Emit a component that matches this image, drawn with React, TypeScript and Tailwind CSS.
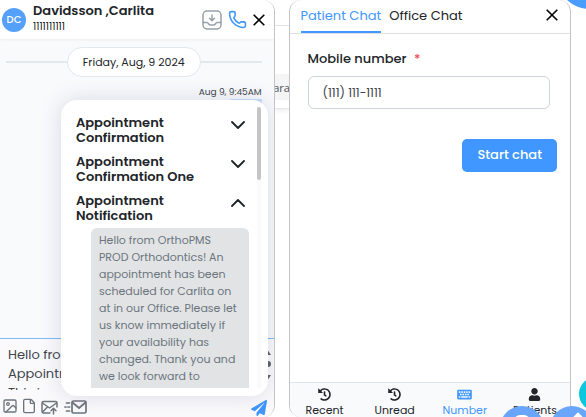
import React from "react";
import { FaHistory, FaKeyboard, FaPaperPlane, FaUser } from "react-icons/fa";
import { File, Image, Phone } from "lucide-react";

const message = `Hello from OrthoPMS
PROD Orthodontics! An
appointment has been
scheduled for Carlita on
at in our Office. Please let
us know immediately if
your availability has
changed. Thank you and
we look forward to`;

function CloseIcon() {
  return (
    <svg viewBox="0 0 12 12" className="size-3" fill="none" stroke="#000" strokeWidth="1.6">
      <path d="M.7.7l10.6 10.6M11.3.7L.7 11.3" />
    </svg>
  );
}

function Chevron({ up = false }: { up?: boolean }) {
  return (
    <svg viewBox="0 0 14 8" className="h-2 w-3.5" fill="none" stroke="#212529" strokeWidth="1.8" strokeLinecap="round" strokeLinejoin="round">
      <path d={up ? "M1 7l6-6 6 6" : "M1 1l6 6 6-6"} />
    </svg>
  );
}

function ArchiveIcon() {
  return (
    <svg viewBox="0 0 20 20" className="size-5" fill="none" stroke="#98a1a9" strokeWidth="1.5" strokeLinecap="round" strokeLinejoin="round">
      <rect x="1" y="1" width="18" height="18" rx="4" />
      <path d="M10 5v5.5M7.5 8.3L10 10.8l2.5-2.5M1 12.5h4c1.5 0 1.6 2.5 3.2 2.5h3.6c1.6 0 1.7-2.5 3.2-2.5h4" />
    </svg>
  );
}

function MailUpIcon() {
  return (
    <svg viewBox="0 0 17 15" className="h-[15px] w-[17px]" fill="none" stroke="#6c757d" strokeWidth="1.5" strokeLinecap="round" strokeLinejoin="round">
      <path d="M9 13H2.5Q1 13 1 11.5V3Q1 1.5 2.5 1.5h12Q16 1.5 16 3v4M1.5 3l7 5 7-5M1.5 12L6 7.5M12.5 14V8.5M10 10.8l2.5-2.5 2.5 2.5" />
    </svg>
  );
}

function MailFastIcon() {
  return (
    <svg viewBox="0 0 23 14" className="h-3.5 w-[23px]" fill="none" stroke="#6c757d" strokeWidth="1.7" strokeLinecap="round" strokeLinejoin="round">
      <rect x="8" y="1" width="14" height="12" rx="1.5" />
      <path d="M8.5 2.5L15 8l6.5-5.5M2.5 3h3M1 7h1M4 7h1.5M2.5 11h3" />
    </svg>
  );
}

function Template({ title, open = false }: { title: [string, string]; open?: boolean }) {
  return (
    <button type="button" aria-expanded={open} className="flex w-full items-start justify-between text-left text-[13px] leading-[15px] font-semibold text-[#212529]">
      <span>
        {title[0]}
        <br />
        {title[1]}
      </span>
      <span className="pt-1.5">
        <Chevron up={open} />
      </span>
    </button>
  );
}

function TemplateMenu() {
  return (
    <div className="absolute top-[100px] right-1.5 left-[61px] flex rounded-2xl bg-white pt-[7px] pr-[7px] pb-2 pl-[15px] shadow-[0_0_22px_rgba(60,50,110,0.16)]">
      <div className="min-w-0 flex-1 pt-2 pr-1">
        <div className="flex flex-col gap-[9px]">
          <Template title={["Appointment", "Confirmation"]} />
          <Template title={["Appointment", "Confirmation One"]} />
          <Template title={["Appointment", "Notification"]} open />
        </div>
        <p className="mt-[5px] -mr-1 ml-[15px] h-40 overflow-hidden rounded-t-md bg-[#e1e3e5] px-2 pt-1 text-[11px] leading-[17px] whitespace-pre text-[#6c757d]">
          {message}
        </p>
      </div>
      <div className="ml-2 w-1 bg-[#fafafa]">
        <div className="h-[73px] rounded-sm bg-[#c4c4c4]" />
      </div>
    </div>
  );
}

function Conversation() {
  return (
    <section className="relative flex grow-[275] basis-0 flex-col overflow-hidden rounded-tr-xl rounded-br-xl border-r border-[#c4c4c4] bg-[#f8fafc]">
      <header className="z-10 flex h-[39px] items-center bg-white pr-[9px] pl-0.5 shadow-[0_1px_3px_rgba(0,0,0,0.06)]">
        <span className="grid size-6 place-items-center rounded-full bg-[#55a0fb] text-[10px] font-medium text-white">DC</span>
        <div className="ml-[7px] flex-1 self-start pt-0.5 text-[#212529]">
          <h1 className="text-[13px] leading-[17px] font-semibold">Davidsson ,Carlita</h1>
          <p className="text-[10px] leading-4">1111111111</p>
        </div>
        <div className="flex items-center">
          <button type="button" aria-label="Archive"><ArchiveIcon /></button>
          <button type="button" aria-label="Call" className="mx-1.5">
            <Phone className="size-[19px] text-[#3f97ff]" strokeWidth={2} />
          </button>
          <button type="button" aria-label="Close conversation"><CloseIcon /></button>
        </div>
      </header>

      <div className="flex-1 pt-2 pr-3 pl-1.5">
        <div className="flex items-center">
          <span className="h-0.5 flex-1 bg-[#e1e8ee]" />
          <span className="rounded-full border border-[#e1e8ee] bg-white px-[15px] text-[11px] leading-7 text-[#212529]">
            Friday, Aug, 9 2024
          </span>
          <span className="h-0.5 flex-1 bg-[#e1e8ee]" />
        </div>
        <p className="pt-2 text-right text-[9px] leading-[14px] text-[#40464c]">Aug 9, 9:45AM</p>
        <div className="ml-auto h-10 w-8 bg-[#c9e0fb]" />
      </div>

      <div className="border-t border-[#7dbafa] bg-[#fafafc]">
        <div className="flex">
          <textarea
            aria-label="Message"
            readOnly
            className="block h-[51px] min-w-0 flex-1 resize-none overflow-hidden bg-transparent pt-1.5 pl-2 text-[13px] leading-[19px] text-[#40464c] outline-none"
            value={"Hello from\nAppointment\nThis is"}
          />
          <svg viewBox="0 0 6 51" className="mr-[3px] h-[51px] w-1.5" fill="#5f6368">
            <path d="M2 10l4 6H0zM2 42l4-6H0z" />
            <circle cx="3" cy="25" r="3" />
          </svg>
        </div>
        <div className="flex h-[27px] items-center pt-1.5 pr-[7px] pb-0.5 pl-0.5 text-[#6c757d]">
          <button type="button" aria-label="Add image"><Image className="size-4" strokeWidth={2} /></button>
          <button type="button" aria-label="Add file" className="ml-[3px]"><File className="size-4" strokeWidth={2} /></button>
          <button type="button" aria-label="Email" className="ml-1 pt-1"><MailUpIcon /></button>
          <button type="button" aria-label="Quick message" className="ml-1.5 pt-0.5"><MailFastIcon /></button>
          <button type="button" aria-label="Send" className="ml-auto pt-1 text-[#3f97ff]"><FaPaperPlane className="size-4" /></button>
        </div>
      </div>
      <TemplateMenu />
    </section>
  );
}

function Backdrop() {
  return (
    <div className="flex w-3.5 flex-col overflow-hidden bg-white text-[#4a5560]">
      <div className="h-[26px] border-b border-[#e4e4e4]" />
      <div className="mt-12 flex h-[26px] justify-center bg-[#f5f5f5] font-['Open_Sans',sans-serif] text-[11px] leading-7">ara</div>
      <div className="h-[9px] border-b border-[#e6e8ea] shadow-[0_2px_4px_rgba(0,0,0,0.07)]" />
    </div>
  );
}

function NewChat() {
  const tab = "flex h-[31px] items-center border-b-2 pb-0.5";
  const nav = "flex flex-col items-center gap-0.5 pt-[5px] text-[11px] leading-[14px]";
  return (
    <section className="flex grow-[282] basis-0 flex-col overflow-hidden rounded-xl border-x border-[#c4c4c4] bg-white text-[#212529]">
      <header className="flex h-[34px] items-end border-b border-[#dee2e6] pr-3 pl-[11px]">
        <nav className="flex flex-1 gap-2 text-[13px]">
          <button type="button" className={`${tab} border-[#3f97ff] text-[#3f97ff]`}>Patient Chat</button>
          <button type="button" className={`${tab} border-transparent`}>Office Chat</button>
        </nav>
        <button type="button" aria-label="Close chat" className="pb-3"><CloseIcon /></button>
      </header>
      <form className="flex flex-1 flex-col pt-[15px] pr-5 pl-[18px]">
        <label htmlFor="mobile" className="text-[13px] leading-5 font-medium">
          Mobile number <span className="ml-1 text-[#f8495a]">*</span>
        </label>
        <input id="mobile" defaultValue="(111) 111-1111" className="mt-[7px] h-[33px] w-full rounded-md border border-[#ced4da] px-3.5 text-[12px] text-[#40464c] outline-none" />
        <button type="button" className="mt-[30px] -mr-[7px] h-[33px] self-end rounded-[5px] bg-[#3f97ff] px-[15px] pb-0.5 text-[13px] font-medium text-white">
          Start chat
        </button>
      </form>
      <footer className="grid h-[35px] grid-cols-4 border-t border-[#dce6f0] bg-[#f8fafc]">
        <button type="button" className={nav}><FaHistory className="size-[13px]" />Recent</button>
        <button type="button" className={nav}><FaHistory className="size-[13px]" />Unread</button>
        <button type="button" className={`${nav} text-[#3f97ff]`}><FaKeyboard className="h-[13px] w-[15px]" />Number</button>
        <button type="button" className={nav}><FaUser className="size-[13px]" />Patients</button>
      </footer>
    </section>
  );
}

export default function App() {
  return (
    <main className="relative flex h-screen overflow-hidden bg-white font-['Poppins',Inter,sans-serif]">
      <Conversation />
      <Backdrop />
      <NewChat />
      <div className="w-[15px]" />
      <span className="absolute -top-[59px] -right-[38px] size-[68px] rounded-full bg-[#4a9cff]" />
      <span className="absolute -right-[27px] bottom-1.5 size-[34px] rounded-full bg-[#0bc8dc]" />
      <span className="absolute right-[42px] -bottom-[33px] flex size-11 justify-center rounded-full bg-[#69a5fa] pt-[9px]">
        <span className="h-3 w-4 rounded-full border-2 border-white" />
      </span>
      <span className="absolute -right-[8px] -bottom-[33px] flex size-11 justify-center rounded-full bg-[#69a5fa] pt-2">
        <span className="ml-3 size-2 rotate-45 bg-white" />
      </span>
    </main>
  );
}
